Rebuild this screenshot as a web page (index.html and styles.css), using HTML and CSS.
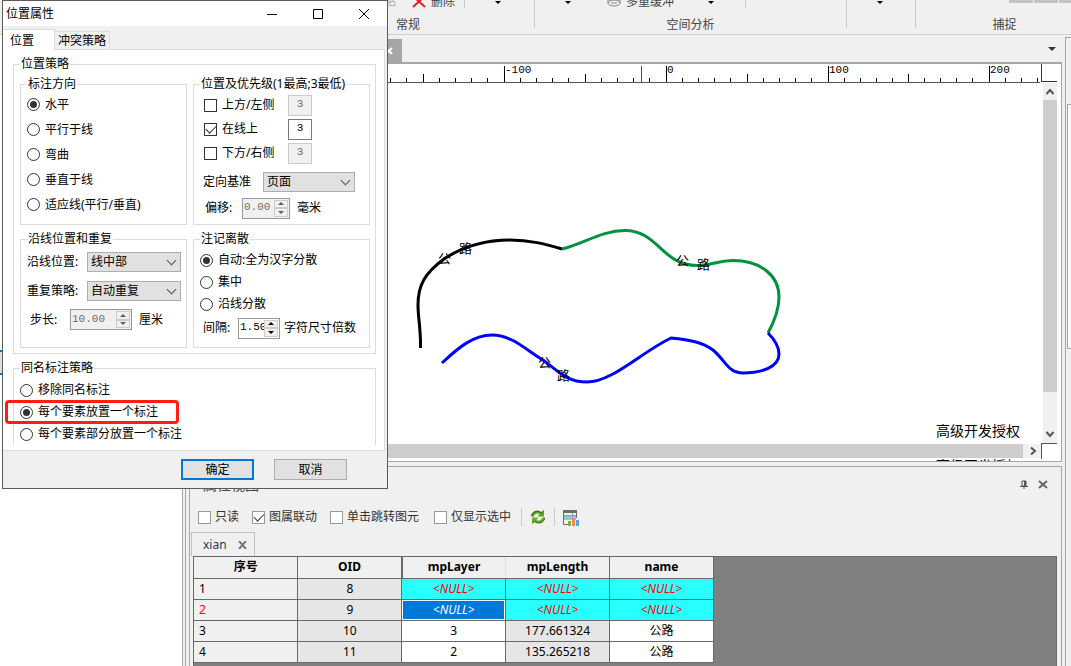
FILE: index.html
```html
<!DOCTYPE html>
<html lang="zh-CN">
<head>
    <meta charset="UTF-8">
    <meta name="viewport" content="width=device-width, initial-scale=1.0">
    <title>位置属性</title>
    <link rel="stylesheet" href="styles.css">
</head>
<body>
    <div class="app">
        <header class="ribbon">
            <div class="ribbon-group group-general">
                <div class="commands">
                    <span class="muted">贴</span>
                    <button class="command delete">
                        <svg width="14" height="12" viewBox="0 0 14 12"><path d="M1 0L13 11M13 0L1 11" stroke="#e02020" stroke-width="2" fill="none"/></svg>
                        删除
                    </button>
                    <span class="divider"></span>
                    <span class="caret"></span>
                </div>
                <div class="group-name">常规</div>
            </div>
            <div class="ribbon-group group-analysis">
                <div class="commands">
                    <span class="caret"></span>
                    <button class="command buffer">
                        <svg width="16" height="12" viewBox="0 0 16 12"><path d="M1 3h14v4H1z" fill="#b8b8b8"/><ellipse cx="8" cy="7" rx="6" ry="3" fill="#eee" stroke="#888"/><path d="M5 7h6" stroke="#888"/></svg>
                        多重缓冲
                    </button>
                    <span class="caret"></span>
                    <span class="divider"></span>
                </div>
                <div class="group-name">空间分析</div>
            </div>
            <div class="ribbon-group group-more">
                <div class="commands"><span class="caret"></span></div>
            </div>
            <div class="ribbon-group group-snap">
                <div class="commands">
                    <span class="swatch"></span>
                    <span class="swatch"></span>
                    <span class="swatch"></span>
                </div>
                <div class="group-name">捕捉</div>
            </div>
        </header>

        <div class="workspace">
            <aside class="left-dock"><div class="dock-item"></div></aside>

            <main class="center">
                <div class="doc-tabs">
                    <div class="doc-tab">
                        <button class="icon-btn" aria-label="关闭">
                            <svg width="8" height="8" viewBox="0 0 8 8"><path d="M1 1l6 6M7 1L1 7" stroke="#fff" stroke-width="2"/></svg>
                        </button>
                    </div>
                    <span class="caret caret-lg"></span>
                </div>

                <section class="map-view">
                    <svg class="ruler" viewBox="190 64 851 19" preserveAspectRatio="xMinYMin slice">
                        <g shape-rendering="crispEdges" stroke="#000" fill="none">
                            <path d="M190 82.500H1040" stroke="#555"/>
                            <path d="M504.500 66v16M666.500 66v16M828.500 66v16M989.500 66v16"/>
                            <path d="M423.500 74v8M585.500 74v8M747.500 74v8M908.500 74v8"/>
                            <path d="M390.500 78v4M406.500 78v4M439.500 78v4M455.500 78v4M471.500 78v4M487.500 78v4M520.500 78v4M536.500 78v4M552.500 78v4M568.500 78v4M601.500 78v4M617.500 78v4M633.500 78v4M649.500 78v4M682.500 78v4M698.500 78v4M714.500 78v4M730.500 78v4M763.500 78v4M779.500 78v4M795.500 78v4M811.500 78v4M844.500 78v4M860.500 78v4M876.500 78v4M892.500 78v4M924.500 78v4M940.500 78v4M956.500 78v4M972.500 78v4M1005.500 78v4M1021.500 78v4M1037.500 78v4"/>
                            <path d="M641.500 66v16" stroke="#f00"/>
                        </g>
                        <g class="ruler-text">
                            <text x="505" y="73">-100</text>
                            <text x="667" y="73">0</text>
                            <text x="829" y="73">100</text>
                            <text x="990" y="73">200</text>
                        </g>
                    </svg>
                    <div class="ruler-corner"></div>

                    <div class="canvas">
                        <svg class="roads" viewBox="190 83 851 360" preserveAspectRatio="xMinYMin meet">
                            <g fill="none" stroke-width="3">
                                <path stroke="#000" d="M420.500 348C421 330 418 318 418 305C418 285 425 273 444 259C465 245 490 240 510 240C530 240 545 244 562 249"/>
                                <path stroke="#00923f" d="M562 249C585 243 602 230.500 625 230.500C658 230.500 662 265.500 697 265.500C712 265.500 718 260.500 733 260.500C760 260.500 779 275 779 297C779 310 774 322 768 333"/>
                                <path stroke="#00f" d="M442 363C458 348 473 335 492 335C512 335 526 350 543 360C557 370 566 382 587 382C612 382 640 353 671 338C690 340 702 342 713 350C726 361 728 373 743 373C762 373 779 367 779 354C779 345 773 338 768 333"/>
                            </g>
                            <g class="road-name">
                                <text x="438" y="263">公</text><text x="459" y="253">路</text>
                                <text x="676" y="265">公</text><text x="697" y="269">路</text>
                                <text x="538" y="367">公</text><text x="557" y="380">路</text>
                            </g>
                        </svg>
                        <div class="license">高级开发授权</div>
                    </div>
                    <div class="scroll-v">
                        <svg width="14" height="17" viewBox="0 0 14 17"><path d="M3.500 11L7 7l3.500 4" stroke="#555" stroke-width="2" fill="none"/></svg>
                        <div class="thumb"></div>
                        <svg width="14" height="17" viewBox="0 0 14 17"><path d="M3.500 6L7 10l3.500-4" stroke="#555" stroke-width="2" fill="none"/></svg>
                    </div>
                    <div class="scroll-h">
                        <div class="thumb"></div>
                        <svg width="18" height="14" viewBox="0 0 18 14"><path d="M8 3.500L12 7l-4 3.500" stroke="#555" stroke-width="2" fill="none"/></svg>
                    </div>
                    <div class="scroll-corner"></div>
                    <div class="license-next">高级开发授权</div>
                </section>

                <section class="attributes">
                    <div class="panel-head">
                        <h2>属性视图</h2>
                        <div class="panel-actions">
                            <button class="icon-btn" aria-label="固定">
                                <svg width="8" height="9" viewBox="0 0 8 9"><path d="M2 1h4v5H2zM0 6.500h8M4 6v3" stroke="#555" fill="none"/><path d="M4 1h2v5H4z" fill="#555"/></svg>
                            </button>
                            <button class="icon-btn" aria-label="关闭">
                                <svg width="10" height="9" viewBox="0 0 10 9"><path d="M1 1l8 7M9 1L1 8" stroke="#666" stroke-width="2"/></svg>
                            </button>
                        </div>
                    </div>
                    <div class="toolbar">
                        <label><input type="checkbox">只读</label>
                        <label><input type="checkbox" checked>图属联动</label>
                        <label><input type="checkbox">单击跳转图元</label>
                        <label><input type="checkbox">仅显示选中</label>
                        <span class="divider"></span>
                        <button class="icon-btn" aria-label="刷新">
                            <svg width="16" height="16" viewBox="0 0 16 16">
                                <path d="M1 7.500C1 2 7.500-.5 11.500 3L14 1v6.500H7.500L9.500 5C7 3.500 4.500 5 4 7.500z" fill="#5fa51c"/>
                                <path d="M2 7C2.500 3 7 .8 11.500 3.800L13.500 2" stroke="#2c6b10" fill="none"/>
                                <path d="M15 8.500C15 14 8.500 16.500 4.500 13L2 15V8.500h6.500L6.500 11C9 12.500 11.500 11 12 8.500z" fill="#6fb02c"/>
                                <path d="M14.500 9C14 13 9 15.200 4.500 12.200L2.500 14" stroke="#2c6b10" fill="none"/>
                            </svg>
                        </button>
                        <span class="divider"></span>
                        <button class="icon-btn" aria-label="统计">
                            <svg width="16" height="17" viewBox="0 0 16 17">
                                <path d="M0 1h14v3H0z" fill="#6b6b6b"/>
                                <path d="M.5 4v11.500H5M13.500 4v5" stroke="#6b6b6b" fill="none"/>
                                <path d="M1 4h12v11H1z" fill="#f4f4f4"/>
                                <path d="M1 7h12v4H1z" fill="#7fcbdc"/>
                                <path d="M1 6.500h12M9.500 4v3" stroke="#999"/>
                                <path d="M5 12h3v5H5z" fill="#7cb82f"/>
                                <path d="M9 9h3v8H9z" fill="#ff7f66"/>
                                <path d="M13 11h3v6h-3z" fill="#4ba8ee"/>
                            </svg>
                        </button>
                    </div>
                    <div class="layer-tab">
                        xian
                        <button class="icon-btn" aria-label="关闭">
                            <svg width="9" height="8" viewBox="0 0 9 8"><path d="M1 0l7 8M8 0L1 8" stroke="#777" stroke-width="2"/></svg>
                        </button>
                    </div>
                    <div class="grid-area">
                        <table>
                            <thead>
                                <tr><th>序号</th><th>OID</th><th class="sorted">mpLayer</th><th>mpLength</th><th>name</th></tr>
                            </thead>
                            <tbody>
                                <tr><td class="num">1</td><td class="locked">8</td><td class="null">&lt;NULL&gt;</td><td class="null">&lt;NULL&gt;</td><td class="null">&lt;NULL&gt;</td></tr>
                                <tr class="current"><td class="num">2</td><td class="locked">9</td><td class="null selected">&lt;NULL&gt;</td><td class="null">&lt;NULL&gt;</td><td class="null">&lt;NULL&gt;</td></tr>
                                <tr><td class="num">3</td><td class="locked">10</td><td>3</td><td class="locked">177.661324</td><td>公路</td></tr>
                                <tr><td class="num">4</td><td class="locked">11</td><td>2</td><td class="locked">135.265218</td><td>公路</td></tr>
                            </tbody>
                        </table>
                    </div>
                </section>
            </main>

            <aside class="right-dock"><div class="dock-item"></div></aside>
        </div>
    </div>

    <div class="dialog" role="dialog" aria-labelledby="dialog-title">
        <div class="title-bar">
            <h1 id="dialog-title">位置属性</h1>
            <div class="window-buttons">
                <button class="icon-btn" aria-label="最小化"><svg width="12" height="12" viewBox="0 0 12 12"><path d="M1 6.500h10" stroke="#000"/></svg></button>
                <button class="icon-btn" aria-label="最大化"><svg width="12" height="12" viewBox="0 0 12 12"><path d="M1.500 1.500h9v9h-9z" stroke="#000" fill="none"/></svg></button>
                <button class="icon-btn" aria-label="关闭"><svg width="12" height="12" viewBox="0 0 12 12"><path d="M1 1l10 10M11 1L1 11" stroke="#000"/></svg></button>
            </div>
        </div>
        <div class="tabs">
            <button class="tab active">位置</button>
            <button class="tab">冲突策略</button>
        </div>

        <form class="page">
            <fieldset class="strategy">
                <legend>位置策略</legend>

                <fieldset class="direction">
                    <legend>标注方向</legend>
                    <label class="row"><input type="radio" name="direction" checked>水平</label>
                    <label class="row"><input type="radio" name="direction">平行于线</label>
                    <label class="row"><input type="radio" name="direction">弯曲</label>
                    <label class="row"><input type="radio" name="direction">垂直于线</label>
                    <label class="row"><input type="radio" name="direction">适应线(平行/垂直)</label>
                </fieldset>

                <fieldset class="priority">
                    <legend>位置及优先级(1最高;3最低)</legend>
                    <div class="row">
                        <label><input type="checkbox">上方/左侧</label>
                        <input type="text" class="rank" value="3" aria-label="上方优先级" disabled>
                    </div>
                    <div class="row">
                        <label><input type="checkbox" checked>在线上</label>
                        <input type="text" class="rank" value="3" aria-label="线上优先级">
                    </div>
                    <div class="row">
                        <label><input type="checkbox">下方/右侧</label>
                        <input type="text" class="rank" value="3" aria-label="下方优先级" disabled>
                    </div>
                    <div class="row tall base">
                        <label for="base">定向基准</label>
                        <span class="select"><select id="base"><option>页面</option></select></span>
                    </div>
                    <div class="row tall">
                        <label for="offset">偏移:</label>
                        <span class="spin disabled">
                            <input type="text" id="offset" value="0.00" disabled>
                            <span class="arrows"><button type="button" aria-label="增加" disabled></button><button type="button" aria-label="减少" disabled></button></span>
                        </span>
                        毫米
                    </div>
                </fieldset>

                <fieldset class="repeat">
                    <legend>沿线位置和重复</legend>
                    <div class="row">
                        <label for="along">沿线位置:</label>
                        <span class="select"><select id="along"><option>线中部</option></select></span>
                    </div>
                    <div class="row">
                        <label for="repeat">重复策略:</label>
                        <span class="select"><select id="repeat"><option>自动重复</option></select></span>
                    </div>
                    <div class="row step">
                        <label for="step">步长:</label>
                        <span class="spin wide disabled">
                            <input type="text" id="step" value="10.00" disabled>
                            <span class="arrows"><button type="button" aria-label="增加" disabled></button><button type="button" aria-label="减少" disabled></button></span>
                        </span>
                        厘米
                    </div>
                </fieldset>

                <fieldset class="scatter">
                    <legend>注记离散</legend>
                    <label class="row"><input type="radio" name="scatter" checked>自动:全为汉字分散</label>
                    <label class="row"><input type="radio" name="scatter">集中</label>
                    <label class="row"><input type="radio" name="scatter">沿线分散</label>
                    <div class="row tall">
                        <label for="space">间隔:</label>
                        <span class="spin narrow">
                            <input type="text" id="space" value="1.50">
                            <span class="arrows"><button type="button" aria-label="增加"></button><button type="button" aria-label="减少"></button></span>
                        </span>
                        字符尺寸倍数
                    </div>
                </fieldset>
            </fieldset>

            <fieldset class="same-name">
                <legend>同名标注策略</legend>
                <label class="row"><input type="radio" name="same">移除同名标注</label>
                <label class="row marked"><input type="radio" name="same" checked>每个要素放置一个标注</label>
                <label class="row"><input type="radio" name="same">每个要素部分放置一个标注</label>
            </fieldset>
        </form>

        <div class="dialog-footer">
            <button class="btn primary">确定</button>
            <button class="btn">取消</button>
        </div>
    </div>
</body>
</html>
```
FILE: styles.css
```css
*, *::before, *::after {
    box-sizing: border-box;
}

body {
    margin: 0;
    height: 100vh;
    overflow: hidden;
    position: relative;
    background: #f0f0f0;
    color: #000;
    font: 12px/16px "Noto Sans", "Noto Sans CJK SC", sans-serif;
}

button, input, select {
    font: inherit;
    color: inherit;
    margin: 0;
}

h1, h2 {
    margin: 0;
    font-weight: normal;
}

svg {
    display: block;
    flex: none;
}

.icon-btn {
    padding: 0;
    border: 0;
    background: none;
}

.app {
    display: flex;
    flex-direction: column;
    height: 100%;
}

/* Ribbon */
.ribbon {
    display: flex;
    flex: none;
    height: 35px;
    padding-left: 282px;
    border-bottom: 1px solid #d0d0d0;
    overflow: hidden;
    color: #444;
}

.ribbon-group {
    flex: none;
    height: 28px;
    border-right: 1px solid #c8c8c8;
}

.group-general { width: 253px; }
.group-analysis { width: 312px; }
.group-more { width: 69px; }
.group-snap { width: 178px; }

.commands {
    display: flex;
    align-items: flex-end;
    height: 10px;
    overflow: hidden;
}

.command {
    display: flex;
    align-items: center;
    gap: 6px;
    padding: 0;
    border: 0;
    background: none;
    white-space: nowrap;
}

.group-general .commands { padding-left: 102px; }
.group-analysis .commands { padding-left: 30px; }
.group-more .commands { padding-left: 30px; }
.group-snap .commands {
    padding-left: 93px;
    gap: 1px;
    align-items: flex-start;
}

.delete { margin: 0 9px 0 16px; gap: 5px; }
.buffer { margin: 0 34px 0 35px; gap: 4px; }
.commands .divider { height: 8px; margin-bottom: 2px; }
.group-general .divider { margin-right: 30px; }
.group-analysis .divider { margin-left: 31px; }
.commands .caret { margin-bottom: 6px; }

.muted {
    color: #aaa;
}

.swatch {
    flex: none;
    width: 24px;
    height: 3px;
    background: #c3c3c3;
}

.group-name {
    padding-top: 7px;
    text-align: center;
}

.divider {
    flex: none;
    width: 1px;
    background: #c8c8c8;
}

.caret {
    flex: none;
    width: 0;
    border: 3px solid transparent;
    border-top-color: #000;
    border-bottom: 0;
}

.caret-lg {
    border-width: 4px 4px 0;
    border-top-color: #333;
}

/* Docks */
.workspace {
    display: flex;
    flex: 1;
    min-height: 0;
}

.left-dock {
    flex: 0 0 186px;
    border-right: 1px solid #a6a6a6;
    padding-top: 315px;
    background: #fff;
    box-shadow: inset -2px 0 #f0f0f0, inset -3px 0 #a6a6a6;
}

.left-dock .dock-item {
    height: 25px;
    border: solid #0078d7;
    border-width: 2px 0;
    background: #ddd;
}

.right-dock {
    flex: 0 0 6px;
    margin: 2px 0 0 3px;
    border: solid #a6a6a6;
    border-width: 1px 0 0 1px;
    padding: 66px 0 0 1px;
}

.right-dock .dock-item {
    height: 245px;
    border: solid #a6a6a6;
    border-width: 1px 0 1px 1px;
    background: #fafafa;
}

.center {
    display: flex;
    flex-direction: column;
    flex: 1;
    min-width: 0;
    margin-left: 3px;
}

.doc-tabs {
    display: flex;
    align-items: center;
    justify-content: space-between;
    flex: none;
    height: 27px;
    padding-right: 6px;
}

.doc-tab {
    display: flex;
    align-items: center;
    justify-content: flex-end;
    width: 213px;
    height: 23px;
    margin-top: 4px;
    padding-right: 9px;
    background: #a6a6a6;
}

/* Map */
.map-view {
    display: grid;
    grid-template-columns: minmax(0, 1fr) 16px;
    grid-template-rows: 19px minmax(0, 1fr) 16px 2px;
    flex: 1;
    min-height: 0;
    margin-bottom: 4px;
    border: 1px solid #a6a6a6;
    border-top-width: 2px;
    padding-right: 4px;
    background: #fff;
}

.ruler {
    width: 100%;
    height: 19px;
}

.ruler-text {
    font: 11px "Liberation Mono", monospace;
}

.ruler-corner {
    height: 18px;
    border: solid #333;
    border-width: 0 0 1px 1px;
}

.canvas {
    position: relative;
    min-height: 0;
}

.roads {
    width: 100%;
    height: 100%;
}

.road-name {
    font-size: 13px;
}

.license {
    position: absolute;
    right: 21px;
    bottom: 2px;
    font-size: 14px;
    line-height: 20px;
}

/* only the top of the next line shows under the scroll bar */
.license-next {
    overflow: hidden;
    padding-right: 21px;
    text-align: right;
    font-size: 14px;
    line-height: 14px;
}

.scroll-v {
    display: flex;
    flex-direction: column;
    margin-left: 2px;
    background: #f0f0f0;
}

.scroll-v .thumb {
    flex: 0 1 292px;
    margin-bottom: auto;
    background: #cdcdcd;
}

.scroll-h {
    display: flex;
    align-items: center;
    margin: 1px 0;
    background: #f0f0f0;
}

.scroll-h .thumb {
    flex: 1;
    height: 100%;
    background: #cdcdcd;
}

.scroll-corner {
    border: solid #555;
    border-width: 1px 0 0 1px;
}

/* Attribute panel */
.attributes {
    display: flex;
    flex-direction: column;
    flex: 0 0 200px;
    border: 1px solid #a6a6a6;
    border-bottom: 0;
}

.panel-head {
    display: flex;
    align-items: center;
    justify-content: space-between;
    height: 35px;
    padding: 0 13px;
}

.panel-head h2 {
    font-size: 14px;
    line-height: 20px;
    color: #444;
}

.panel-actions {
    display: flex;
    align-items: center;
    gap: 10px;
}

.toolbar {
    display: flex;
    align-items: center;
    height: 30px;
    padding-left: 8px;
    color: #333;
}

.toolbar label {
    display: flex;
    align-items: center;
    gap: 4px;
    margin-right: 13px;
}

.toolbar label:nth-of-type(3) {
    margin-right: 15px;
}

.toolbar label:nth-of-type(4) {
    margin-right: 10px;
}

.toolbar .divider {
    height: 18px;
    margin-right: 8px;
}

.toolbar .icon-btn {
    margin-right: 8px;
}

.layer-tab {
    display: flex;
    align-items: center;
    gap: 11px;
    width: 64px;
    height: 24px;
    margin-left: 1px;
    padding-left: 11px;
    border: 1px solid #c0c0c0;
    border-bottom: 0;
    color: #1e395b;
}

.grid-area {
    flex: 1;
    min-height: 0;
    margin: 0 4px 0 3px;
    border: solid #696969;
    border-width: 1px 1px 0;
    overflow: hidden;
    background: #808080;
}

table {
    border-collapse: collapse;
    table-layout: fixed;
    width: 520px;
}

th, td {
    height: 21px;
    padding: 0;
    border: solid #696969;
    border-width: 0 1px 1px 0;
    text-align: center;
    background: #fff;
}

th {
    background: #f0f0f0;
}

th.sorted {
    border-left: 2px solid #696969;
    border-right-color: #e0e0e0;
}

td.num {
    padding-left: 5px;
    text-align: left;
    background: #f0f0f0;
}

td.locked {
    background: #e6e6e6;
}

td.null {
    font-style: italic;
    color: #f00;
    background: #28ffff;
}

td.selected {
    color: #fff;
    background: #0078d7;
    box-shadow: inset 0 0 0 1px #fff;
}

.current .num {
    color: #f00;
}

/* Dialog */
.dialog {
    position: absolute;
    left: 2px;
    top: 0;
    width: 386px;
    border: 1px solid #5a5a5a;
    background: #f0f0f0;
}

.title-bar {
    display: flex;
    align-items: center;
    justify-content: space-between;
    height: 25px;
    padding: 0 17px 0 3px;
    background: #fff;
}

.title-bar h1 {
    font-size: 12px;
}

.window-buttons {
    display: flex;
    gap: 34px;
}

.tabs {
    display: flex;
    align-items: flex-end;
    height: 23px;
}

.tab {
    height: 18px;
    padding: 0 3px;
    border: 1px solid #dcdcdc;
    border-width: 1px 1px 0 0;
    line-height: 17px;
    text-align: left;
    background: #f0f0f0;
}

.tab.active {
    width: 52px;
    height: 21px;
    padding-left: 7px;
    margin-bottom: -1px;
    z-index: 1;
    background: #fff;
}

.page {
    display: flex;
    flex-direction: column;
    gap: 6px;
    margin-right: 2px;
    padding: 6px 8px 5px 10px;
    border: 1px solid #dcdcdc;
    border-left: 0;
    background: #fff;
}

fieldset {
    min-width: 0;
    margin: 0;
    padding: 0 6px;
    border: 1px solid #dcdcdc;
}

legend {
    height: 16px;
    padding: 0 1px;
}

.strategy {
    display: grid;
    grid-template-columns: 167fr 177fr;
    gap: 6px;
    padding: 4px 5px 5px 6px;
}

.row {
    display: flex;
    align-items: center;
    height: 24px;
    white-space: nowrap;
}

.row.tall {
    height: 26px;
}

.direction .row {
    height: 25px;
    gap: 5px;
}

.priority {
    padding: 1px 9px 3px 10px;
}

.priority > legend {
    margin-left: -4px;
}

.priority .row label {
    display: flex;
    align-items: center;
    gap: 5px;
    flex: none;
}

.priority .row:not(.tall) label {
    width: 84px;
}

.priority .base {
    margin: 4px 0 0 -1px;
}

.base label {
    width: 60px;
}

.priority .row.tall:last-child label {
    padding-left: 1px;
    width: 38px;
}

.repeat {
    padding-right: 5px;
}

.repeat .row {
    height: 29px;
}

.repeat .row label {
    flex: none;
    width: 60px;
}

.repeat .step label {
    padding-left: 3px;
    width: 43px;
}

.scatter {
    padding: 2px 6px 6px;
}

.scatter .row, .same-name .row {
    height: 22px;
    gap: 5px;
}

.scatter .row.tall {
    height: 26px;
    gap: 0;
    padding-left: 3px;
}

.scatter .tall label {
    width: 35px;
}

.scatter .spin {
    margin-right: 4px;
}

.same-name {
    padding: 3px 6px 0;
    border-bottom: 0;
}

.marked {
    position: relative;
}

.marked::after {
    content: "";
    position: absolute;
    left: -15px;
    top: -1px;
    width: 174px;
    height: 24px;
    border: 3px solid #ff1e10;
    border-radius: 4px;
}

/* Form controls */
input[type="radio"], input[type="checkbox"] {
    appearance: none;
    display: grid;
    place-items: center;
    flex: none;
    width: 13px;
    height: 13px;
    border: 1px solid #333;
    background: #fff;
}

input[type="radio"] {
    border-radius: 50%;
}

input[type="radio"]:checked::after {
    content: "";
    width: 7px;
    height: 7px;
    border-radius: 50%;
    background: #333;
}

input[type="checkbox"]:checked::after {
    content: "";
    width: 10px;
    height: 6px;
    margin-bottom: 3px;
    border: solid #333;
    border-width: 0 0 1px 1px;
    transform: rotate(-45deg);
}

.toolbar input[type="checkbox"] {
    border-color: #999;
}

input[type="text"] {
    min-width: 0;
    border: 1px solid #7a7a7a;
    border-radius: 0;
    padding: 0;
    background: #fff;
    font: 11px "Liberation Mono", monospace;
}

input[type="text"]:disabled {
    color: #6d6d6d;
    border-color: #ccc;
    background: #f0f0f0;
}

.row .rank {
    width: 24px;
    height: 21px;
    padding-bottom: 2px;
    text-align: center;
}

.select {
    display: block;
    position: relative;
    flex: 1;
    height: 20px;
}

.base .select {
    flex: 0 0 92px;
}

.select::after {
    content: "";
    position: absolute;
    right: 6px;
    top: 5px;
    width: 7px;
    height: 7px;
    border: solid #555;
    border-width: 0 1px 1px 0;
    transform: rotate(45deg);
}

select {
    appearance: none;
    display: block;
    width: 100%;
    height: 20px;
    padding: 0 3px;
    border: 1px solid #adadad;
    border-radius: 0;
    background: #e1e1e1;
}

.spin {
    display: flex;
    flex: none;
    width: 48px;
    height: 21px;
    margin-right: 7px;
    border: 1px solid #999;
    padding: 1px;
    background: #fff;
}

.spin.wide { width: 62px; }
.spin.narrow { width: 42px; }

.spin input[type="text"] {
    flex: 1;
    width: 0;
    border: 0;
    padding-bottom: 2px;
}

.spin.disabled {
    background: #f0f0f0;
}

.arrows {
    display: flex;
    flex-direction: column;
    width: 14px;
}

.arrows button {
    display: grid;
    place-items: center;
    flex: 1;
    min-height: 0;
    padding: 0;
    border: 1px solid #ccc;
    background: #f0f0f0;
}

.arrows button::before {
    content: "";
    width: 0;
    border: 3px solid transparent;
    border-top: 0;
    border-bottom-color: #000;
}

.arrows button:last-child::before {
    border-top: 3px solid #000;
    border-bottom: 0;
}

.spin.disabled button::before {
    opacity: 0.6;
}

.dialog-footer {
    display: flex;
    justify-content: flex-end;
    align-items: center;
    gap: 20px;
    height: 37px;
    padding-right: 40px;
}

.btn {
    width: 73px;
    height: 21px;
    padding: 0;
    border: 1px solid #adadad;
    line-height: 17px;
    background: #e1e1e1;
}

.btn.primary {
    border: 2px solid #0078d7;
    line-height: 15px;
}
```
